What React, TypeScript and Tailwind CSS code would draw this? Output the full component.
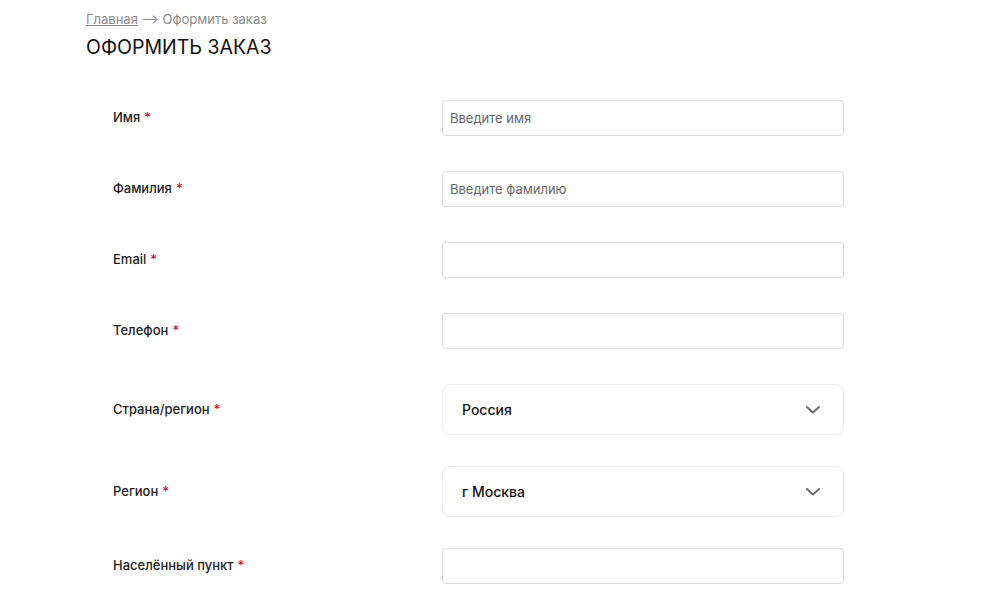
import React from "react";

function Req() {
  return <span className="ml-1 text-[#c8102e]">*</span>;
}

function Label({ text }: { text: string }) {
  return (
    <div className="w-[329px] shrink-0 text-[13px] font-medium text-[#222]">
      {text}
      <Req />
    </div>
  );
}

function TextRow({ label, placeholder, className }: { label: string; placeholder?: string; className?: string }) {
  return (
    <div className={"flex items-center " + (className ?? "")}>
      <Label text={label} />
      <input
        placeholder={placeholder}
        className="h-[36px] w-[402px] rounded-[4px] border border-[#dcdcdc] bg-white px-[7px] text-[13px] text-[#222] outline-none placeholder:text-[#666]"
      />
    </div>
  );
}

function SelectRow({ label, value, className }: { label: string; value: string; className?: string }) {
  return (
    <div className={"flex items-center " + (className ?? "")}>
      <Label text={label} />
      <div className="flex h-[51px] w-[402px] items-center justify-between rounded-[8px] border border-[#ececec] bg-white pl-[19px] pr-[22px]">
        <span className="text-[14px] font-medium text-[#111]">{value}</span>
        <svg width="16" height="10" viewBox="0 0 16 10" fill="none">
          <path d="M2 2l6 5.5L14 2" stroke="#6b6b6b" strokeWidth="2" strokeLinecap="round" strokeLinejoin="round" />
        </svg>
      </div>
    </div>
  );
}

export default function App() {
  return (
    <div className="min-h-[600px] bg-white" style={{ fontFamily: "Inter, 'Noto Sans', sans-serif" }}>
      <div className="px-[86px] pt-[11px]">
        <div className="text-[13px] leading-[16px] text-[#8a8a8a]">
          <a href="#" className="underline">Главная</a>
          <span> ⟶ Оформить заказ</span>
        </div>
        <h1 className="mt-[8px] text-[19.5px] leading-[24px] font-normal text-[#111]">ОФОРМИТЬ ЗАКАЗ</h1>

        <div className="mt-[41px] pl-[27px]">
          <TextRow label="Имя" placeholder="Введите имя" className="mb-[35px]" />
          <TextRow label="Фамилия" placeholder="Введите фамилию" className="mb-[35px]" />
          <TextRow label="Email" className="mb-[35px]" />
          <TextRow label="Телефон" className="mb-[35px]" />
          <SelectRow label="Страна/регион" value="Россия" className="mb-[31px]" />
          <SelectRow label="Регион" value="г Москва" className="mb-[31px]" />
          <TextRow label="Населённый пункт" />
        </div>
      </div>
    </div>
  );
}
